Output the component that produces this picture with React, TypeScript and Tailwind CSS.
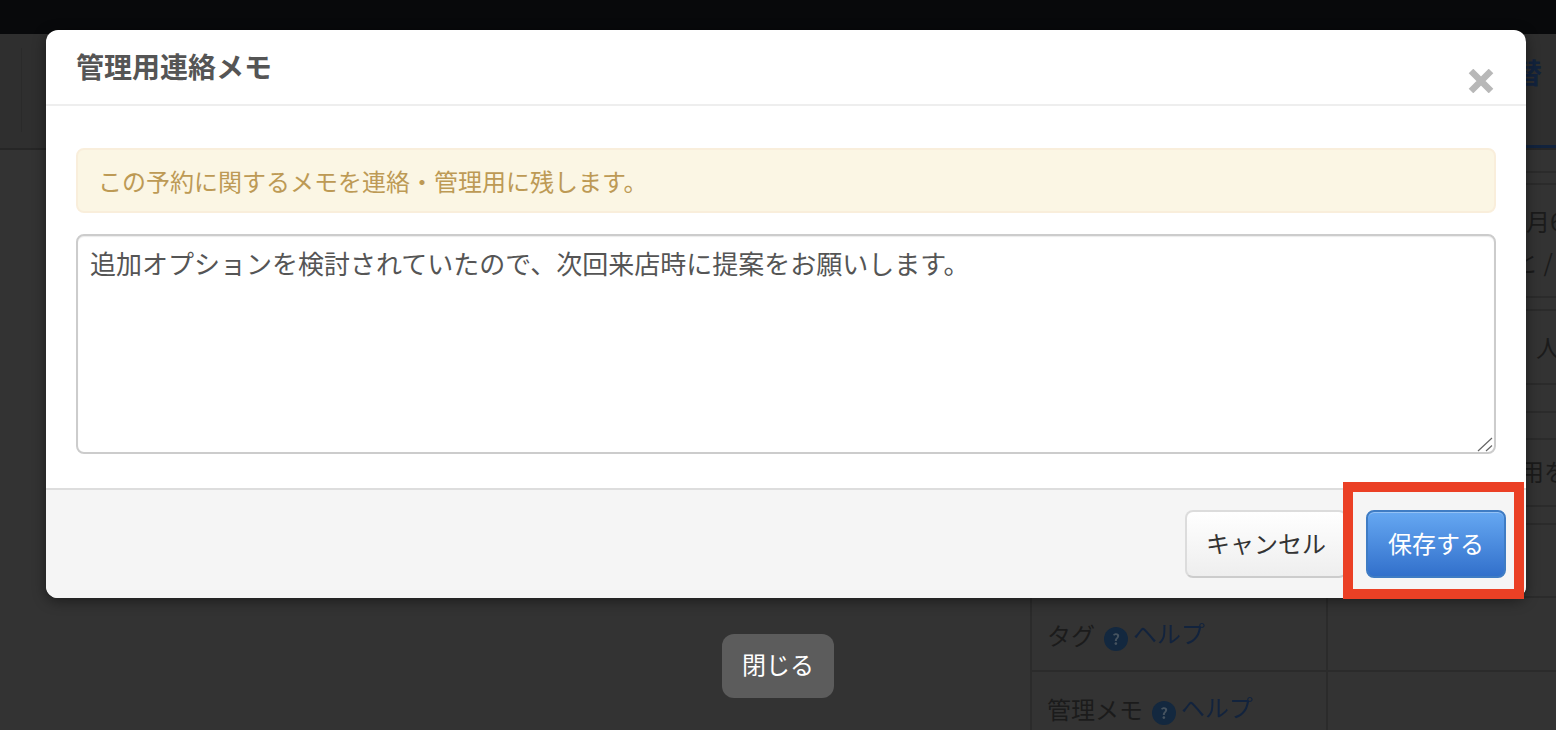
const fontStack = { fontFamily: '"Noto Sans CJK JP", "Noto Sans", sans-serif' };

function HelpLink() {
    return (
        <span className="ml-[9px] inline-flex items-center blur-[0.4px]">
            <span className="mt-3 flex h-6 w-6 items-center justify-center rounded-full bg-[#13283f] text-[15px] font-bold text-[#46535f]">
                ?
            </span>
            <span className="ml-[5px] text-[#12233d]">ヘルプ</span>
        </span>
    );
}

const rows: { height: string; label?: React.ReactNode; value?: React.ReactNode }[] = [
    { height: "h-[23px]" },
    { height: "h-[12px]" },
    {
        height: "h-[113px]",
        value: (
            <div className="pl-[198px] pt-[15px] leading-[41px] whitespace-nowrap">
                <div>月6</div>
                <div className="-ml-[12px]">と /</div>
            </div>
        ),
    },
    { height: "h-[13px]" },
    {
        height: "h-[74px]",
        value: <div className="pl-[208px] pt-[18px] whitespace-nowrap">人</div>,
    },
    { height: "h-[28px]" },
    { height: "h-[27px]" },
    {
        height: "h-[67px]",
        value: <div className="pl-[192px] pt-[13px] whitespace-nowrap">用を</div>,
    },
    { height: "h-[18px]" },
    { height: "h-[73px]" },
    {
        height: "h-[74px]",
        label: (
            <>
                タグ
                <HelpLink />
            </>
        ),
    },
    {
        height: "h-[74px]",
        label: (
            <>
                管理メモ
                <HelpLink />
            </>
        ),
    },
];

function Background() {
    return (
        <div className="flex h-[730px] flex-col overflow-hidden bg-[#333333] text-[24px] text-[#1b1b1b]">
            <div className="h-[34px] shrink-0 bg-[#08090b]" />
            <div className="relative flex h-[116px] shrink-0 items-center justify-end border-b-2 border-[#262626] bg-[#2f2f2f]">
                <div className="absolute left-[21px] top-[14px] h-[84px] w-px bg-[#2a2a2a]" />
                <div className="w-[42px] self-start pt-[18px] text-[28px] leading-[40px] font-bold text-[#12233d]">
                    替
                </div>
                <div className="absolute bottom-0 right-0 h-[3px] w-[30px] bg-[#12233d]" />
            </div>
            <div className="flex flex-1 justify-end">
                <div className="w-[526px] border-l-2 border-[#2b2b2b]">
                    {rows.map((row, i) => (
                        <div key={i} className={`flex border-b-2 border-[#2b2b2b] ${row.height}`}>
                            <div className="w-[294px] shrink-0 pl-[15px] pt-[17px] leading-[36px] whitespace-nowrap">
                                {row.label}
                            </div>
                            <div className="min-w-0 flex-1 overflow-hidden border-l-2 border-[#2b2b2b]">
                                {row.value}
                            </div>
                        </div>
                    ))}
                </div>
            </div>
        </div>
    );
}

function MemoModal() {
    return (
        <div className="absolute left-[46px] top-[30px] flex h-[568px] w-[1480px] flex-col overflow-hidden rounded-xl bg-white shadow-[0_3px_14px_rgba(0,0,0,0.45)]">
            <div className="flex h-[76px] shrink-0 justify-between border-b-2 border-[#eeeeee] pl-[30px] pr-[32px]">
                <h3 className="pt-[16px] text-[28px] leading-[40px] font-bold text-[#555555]">
                    管理用連絡メモ
                </h3>
                <svg width="26" height="24" viewBox="0 0 26 24" className="mt-[39px]">
                    <path d="M3 2 L23 22 M23 2 L3 22" stroke="#b8b8b8" strokeWidth="6.5" />
                </svg>
            </div>

            <div className="flex flex-1 flex-col px-[30px] pt-[42px]">
                <div className="flex h-[65px] shrink-0 items-center rounded-lg border-2 border-[#f9eedb] bg-[#fbf6e4] pl-[20px] text-[24px] text-[#bd9a55]">
                    この予約に関するメモを連絡・管理用に残します。
                </div>
                <div className="relative mt-[21px] h-[220px] shrink-0">
                    <textarea
                        readOnly
                        defaultValue="追加オプションを検討されていたので、次回来店時に提案をお願いします。"
                        style={fontStack}
                        className="h-full w-full resize-none rounded-lg border-2 border-[#cccccc] px-3 py-[7px] text-[26px] leading-[40px] text-[#555555] shadow-[inset_0_1px_1px_rgba(0,0,0,0.08)] outline-none"
                    />
                    <svg width="16" height="16" viewBox="0 0 16 16" className="absolute bottom-[2px] right-[3px]">
                        <path d="M1 15 L15 2 M9 15 L15 9.5" stroke="#666666" strokeWidth="1.2" />
                    </svg>
                </div>
            </div>

            <div className="flex h-[110px] shrink-0 justify-end gap-[19px] border-t-2 border-[#dddddd] bg-[#f5f5f5] pr-[20px] pt-[20px]">
                <button className="h-[68px] w-[162px] rounded-lg border-2 border-[#dcdcdc] border-b-[#cccccc] bg-gradient-to-b from-white to-[#eeeeee] pb-[3px] text-[24px] text-[#333333]">
                    キャンセル
                </button>
                <button className="h-[68px] w-[140px] rounded-lg border-2 border-[#3f7cc4] bg-gradient-to-b from-[#66a8f2] to-[#3270cb] pb-[3px] text-[24px] text-white shadow-[inset_0_1px_0_rgba(255,255,255,0.3)]">
                    保存する
                </button>
            </div>
        </div>
    );
}

export default function App() {
    return (
        <div className="relative h-[730px] w-[1556px] overflow-hidden" style={fontStack}>
            <Background />
            <MemoModal />
            <button className="absolute left-[722px] top-[634px] h-16 w-28 rounded-xl bg-[#5c5c5c] pb-1 text-[24px] text-white">
                閉じる
            </button>
            <div className="absolute left-[1343px] top-[482px] h-[117px] w-[181px] border-[10px] border-[#eb4025]" />
        </div>
    );
}
